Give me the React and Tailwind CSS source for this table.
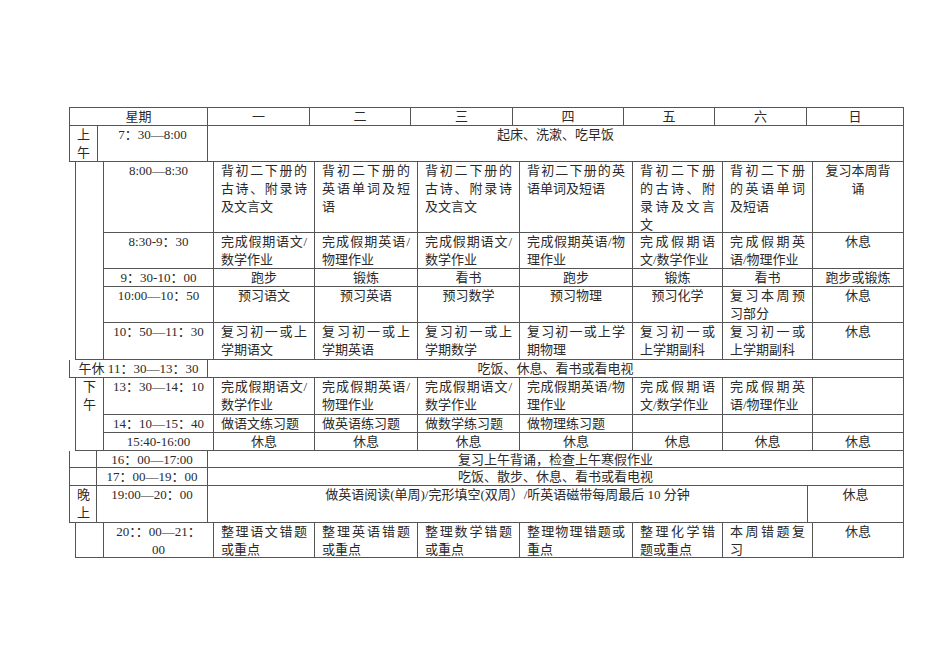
import React from 'react';
import clsx from 'clsx';

// 列宽（含右边框）：时间列之后的 一 … 日
const dayW = ['w-[101px]', 'w-[103px]', 'w-[102px]', 'w-[113px]', 'w-[90px]', 'w-[90px]', 'w-[91px]'];
const headW = ['w-[102px]', 'w-[101px]', 'w-[102px]', 'w-[111px]', 'w-[91px]', 'w-[92px]', 'w-[97px]'];

const j = (t) => ({ t, j: true });

const Cell = ({ w, justify, children, className }) => (
  <div
    className={clsx(
      'shrink-0 border-r border-[#555] px-[7px]',
      w,
      justify ? 'text-justify' : 'text-center',
      className
    )}
  >
    {children}
  </div>
);

const BodyRow = ({ h, time, cells, last }) => (
  <div className={clsx('flex', h, !last && 'border-b border-[#555]')}>
    <Cell w="w-[110px]" className="px-[4px]">{time}</Cell>
    {cells.map((c, i) => {
      const obj = typeof c === 'string' ? { t: c } : c;
      return (
        <Cell key={i} w={dayW[i]} justify={obj.j}>
          {obj.t}
        </Cell>
      );
    })}
  </div>
);

const WideRow = ({ h, label, time, text, rest }) => (
  <div className={clsx('flex border-b border-l border-[#555]', h)}>
    <Cell w="w-[27px]" className="px-[6px]">{label}</Cell>
    <Cell w="w-[111px]" className="px-[4px]">{time}</Cell>
    {rest ? (
      <>
        <Cell w="w-[600px]">{text}</Cell>
        <Cell w="w-[96px]">{rest}</Cell>
      </>
    ) : (
      <Cell w="w-[696px]">{text}</Cell>
    )}
  </div>
);

export default function App() {
  const yw = j('完成假期语文/数学作业');
  const ew = j('完成假期英语/物理作业');

  return (
    <div
      className="min-h-screen bg-white pl-[69px] pt-[107px] text-[13px] leading-[18px] text-[#2a2a2a]"
      style={{ fontFamily: '"Liberation Serif", "Noto Sans CJK SC", serif' }}
    >
      <div className="w-[835px]">
        {/* 表头 */}
        <div className="flex h-[19px] border border-r-0 border-[#555] leading-[17px]">
          <Cell w="w-[138px]">星期</Cell>
          {['一', '二', '三', '四', '五', '六', '日'].map((d, i) => (
            <Cell key={d} w={headW[i]}>{d}</Cell>
          ))}
        </div>

        {/* 上午 7:30 */}
        <div className="flex h-[36px] border-b border-l border-[#555]">
          <Cell w="w-[28px]">上午</Cell>
          <Cell w="w-[110px]" className="px-[4px]">7：30—8:00</Cell>
          <Cell w="w-[696px]">起床、洗漱、吃早饭</Cell>
        </div>
      </div>

      {/* 上午学习段 */}
      <div className="ml-[6px] flex w-[829px] border-b border-l border-[#555]">
        <div className="w-[28px] shrink-0 border-r border-[#555]" />
        <div className="flex flex-col">
          <BodyRow
            h="h-[71px]"
            time="8:00—8:30"
            cells={[
              j('背初二下册的古诗、附录诗及文言文'),
              j('背初二下册的英语单词及短语'),
              j('背初二下册的古诗、附录诗及文言文'),
              j('背初二下册的英语单词及短语'),
              j('背初二下册的古诗、附录诗及文言文'),
              j('背初二下册的英语单词及短语'),
              '复习本周背诵',
            ]}
          />
          <BodyRow h="h-[36px]" time="8:30-9：30" cells={[yw, ew, yw, ew, yw, ew, '休息']} />
          <BodyRow
            h="h-[18px]"
            time="9：30-10：00"
            cells={['跑步', '锻炼', '看书', '跑步', '锻炼', '看书', '跑步或锻炼']}
          />
          <BodyRow
            h="h-[36px]"
            time="10:00—10：50"
            cells={['预习语文', '预习英语', '预习数学', '预习物理', '预习化学', j('复习本周预习部分'), '休息']}
          />
          <BodyRow
            h="h-[36px]"
            time="10：50—11：30"
            last
            cells={[
              j('复习初一或上学期语文'),
              j('复习初一或上学期英语'),
              j('复习初一或上学期数学'),
              j('复习初一或上学期物理'),
              j('复习初一或上学期副科'),
              j('复习初一或上学期副科'),
              '休息',
            ]}
          />
        </div>
      </div>

      {/* 午休 */}
      <div className="flex h-[18px] w-[835px] border-b border-l border-[#555]">
        <Cell w="w-[138px]" className="px-[4px]">午休 11：30—13：30</Cell>
        <Cell w="w-[696px]">吃饭、休息、看书或看电视</Cell>
      </div>

      {/* 下午 */}
      <div className="ml-[6px] flex w-[829px] border-b border-l border-[#555]">
        <Cell w="w-[28px]">下午</Cell>
        <div className="flex flex-col">
          <BodyRow h="h-[37px]" time="13：30—14：10" cells={[yw, ew, yw, ew, yw, ew, '']} />
          <BodyRow
            h="h-[18px]"
            time="14：10—15：40"
            cells={[j('做语文练习题'), j('做英语练习题'), j('做数学练习题'), j('做物理练习题'), '', '', '']}
          />
          <BodyRow
            h="h-[17px]"
            time="15:40-16:00"
            last
            cells={['休息', '休息', '休息', '休息', '休息', '休息', '休息']}
          />
        </div>
      </div>

      <div className="w-[835px]">
        <WideRow h="h-[17px]" label="" time="16：00—17:00" text="复习上午背诵，检查上午寒假作业" />
        <WideRow h="h-[18px]" label="" time="17：00—19：00" text="吃饭、散步、休息、看书或看电视" />
        <WideRow
          h="h-[37px]"
          label="晚上"
          time="19:00—20：00"
          text="做英语阅读(单周)/完形填空(双周）/听英语磁带每周最后 10 分钟"
          rest="休息"
        />
      </div>

      {/* 晚上 20:00 */}
      <div className="ml-[6px] flex h-[35px] w-[829px] border-b border-l border-[#555]">
        <div className="w-[28px] shrink-0 border-r border-[#555]" />
        <BodyRow
          h="h-[34px]"
          time={
            <>
              20：：00—21：
              <br />
              00
            </>
          }
          last
          cells={[
            j('整理语文错题或重点'),
            j('整理英语错题或重点'),
            j('整理数学错题或重点'),
            j('整理物理错题或重点'),
            j('整理化学错题或重点'),
            j('本周错题复习'),
            '休息',
          ]}
        />
      </div>
    </div>
  );
}
